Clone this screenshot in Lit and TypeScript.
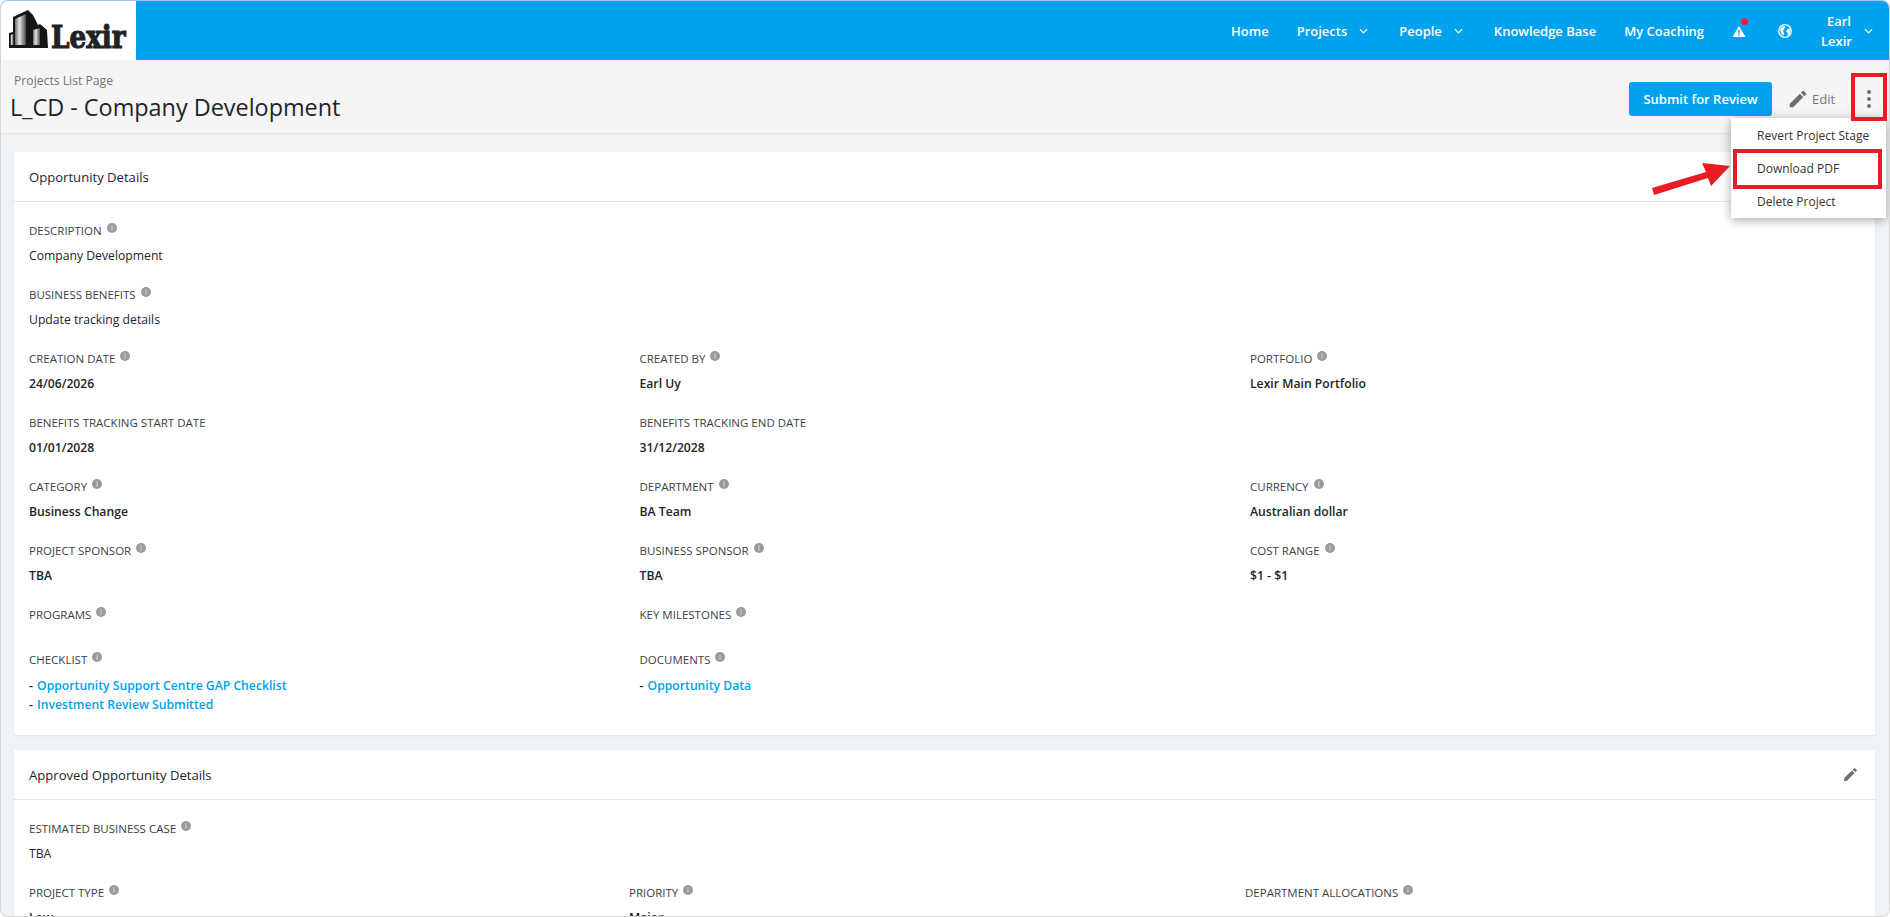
import { LitElement, html, css, svg } from 'lit';
import { customElement } from 'lit/decorators.js';

const PENCIL = svg`<path d="M3 17.25V21h3.75L17.81 9.94l-3.75-3.75L3 17.25zM20.71 7.04a1 1 0 0 0 0-1.41l-2.34-2.34a1 1 0 0 0-1.41 0l-1.83 1.83 3.75 3.75 1.83-1.83z"/>`;

const chevron = () => html`<svg class="chev" viewBox="0 0 10 6"><path d="M1 1l4 4 4-4" fill="none" stroke="currentColor" stroke-width="1.3"/></svg>`;

const info = () => html`<svg class="info" viewBox="0 0 10 10"><circle cx="5" cy="5" r="5" fill="#9b9b9b"/><rect x="4.4" y="4.3" width="1.2" height="3.2" fill="#d8d8d8"/><rect x="4.4" y="2.5" width="1.2" height="1.1" fill="#d8d8d8"/></svg>`;

interface Field {
  label: string;
  value?: string;
  strong?: boolean;
  noInfo?: boolean;
}

const fieldsA: Field[] = [
  { label: 'CREATION DATE', value: '24/06/2026', strong: true },
  { label: 'CREATED BY', value: 'Earl Uy', strong: true },
  { label: 'PORTFOLIO', value: 'Lexir Main Portfolio', strong: true },
  { label: 'BENEFITS TRACKING START DATE', value: '01/01/2028', strong: true, noInfo: true },
  { label: 'BENEFITS TRACKING END DATE', value: '31/12/2028', strong: true, noInfo: true },
  { label: '' },
  { label: 'CATEGORY', value: 'Business Change', strong: true },
  { label: 'DEPARTMENT', value: 'BA Team', strong: true },
  { label: 'CURRENCY', value: 'Australian dollar', strong: true },
  { label: 'PROJECT SPONSOR', value: 'TBA', strong: true },
  { label: 'BUSINESS SPONSOR', value: 'TBA', strong: true },
  { label: 'COST RANGE', value: '$1 - $1', strong: true },
];

@customElement('app-root')
export class AppRoot extends LitElement {
  static styles = css`
    :host {
      display: block;
      height: 917px;
      overflow: hidden;
      font-family: 'Open Sans', sans-serif;
      color: #212529;
    }
    .frame {
      position: relative;
      height: 917px;
      box-sizing: border-box;
      overflow: hidden;
      background: #f0f3f6;
      border: 1px solid #d4d4d4;
      border-top-color: #9fc9e6;
      border-radius: 8px;
    }
    nav {
      height: 59px;
      display: flex;
      align-items: center;
      background: #00a2ee;
      color: #fff;
      font-size: 13px;
      font-weight: 600;
    }
    .logo {
      width: 135px;
      height: 59px;
      background: #fff;
      display: flex;
      align-items: flex-start;
      padding: 7px 0 0 7px;
      box-sizing: border-box;
      flex: none;
    }
    .logo svg { width: 41px; height: 42px; flex: none; }
    .logo span {
      display: inline-block;
      font-family: 'DejaVu Serif', 'Liberation Serif', serif;
      font-weight: 700;
      font-size: 32px;
      line-height: 32px;
      color: #222;
      -webkit-text-stroke: 1.2px #222;
      margin: 13px 0 0 2px;
      transform: scaleX(0.82);
      transform-origin: left center;
    }
    .menu {
      margin-left: auto;
      display: flex;
      align-items: center;
      height: 100%;
    }
    .menu a { display: flex; align-items: center; white-space: nowrap; }
    .chev { width: 9px; height: 6px; margin-left: 12px; }
    .user {
      width: 30px;
      text-align: right;
      line-height: 20px;
      margin-left: 29px;
    }
    .alert { position: relative; width: 16px; height: 16px; margin-left: 27px; }
    .alert svg { width: 16px; height: 16px; display: block; }
    .alert i {
      position: absolute;
      left: 10px;
      top: -5px;
      width: 7px;
      height: 7px;
      border-radius: 50%;
      background: #ef1c4b;
    }
    .globe { width: 14px; height: 14px; margin-left: 31px; }
    .user-chev { margin: 0 16px 0 1px; display: flex; }
    header {
      height: 74px;
      box-sizing: border-box;
      background: #f5f5f5;
      border-bottom: 1px solid #dfe3e6;
      display: flex;
      align-items: flex-start;
      justify-content: space-between;
      position: relative;
    }
    .crumb {
      font-size: 12.2px;
      color: #6c757d;
      margin: 13px 0 0 13px;
      line-height: 16px;
    }
    h1 {
      font-size: 23.4px;
      font-weight: 400;
      line-height: 32px;
      margin: 2px 0 0 9px;
      color: #212529;
    }
    .actions {
      display: flex;
      align-items: center;
      margin: 22px 18px 0 0;
    }
    .submit {
      width: 143px;
      height: 34px;
      box-sizing: border-box;
      background: #00a2ee;
      color: #fff;
      border: 0;
      border-radius: 3px;
      font: 600 13px 'Open Sans', sans-serif;
      padding: 0;
    }
    .edit {
      display: flex;
      align-items: center;
      color: #777;
      font-size: 13px;
      margin-left: 15px;
      width: 58px;
    }
    .edit svg { width: 22px; height: 22px; fill: #6f6f6f; margin-right: 3px; }
    .dots {
      display: flex;
      flex-direction: column;
      gap: 3px;
      margin-left: 22px;
      width: 4px;
    }
    .dots i { width: 4px; height: 4px; border-radius: 50%; background: #707070; }
    .dropdown {
      position: absolute;
      left: 1730px;
      top: 117px;
      width: 155px;
      height: 100px;
      box-sizing: border-box;
      padding-top: 1px;
      background: #fff;
      box-shadow: 0 2px 10px rgba(0, 0, 0, 0.35);
      font-size: 12px;
      color: #333;
      z-index: 2;
    }
    .dropdown div {
      height: 33px;
      line-height: 33px;
      padding-left: 26px;
      white-space: nowrap;
    }
    .box {
      position: absolute;
      border: 4px solid #e91c24;
      box-sizing: border-box;
      z-index: 3;
    }
    .box.dots-box { left: 1850px; top: 72px; width: 36px; height: 48px; }
    .box.pdf-box { left: 1732px; top: 148px; width: 149px; height: 40px; }
    .arrow { position: absolute; left: 1649px; top: 159px; width: 84px; height: 36px; z-index: 3; }
    main { padding: 18px 14px 0 13px; }
    .card {
      background: #fff;
      box-shadow: 0 1px 2px rgba(0, 0, 0, 0.07);
      margin-bottom: 15px;
    }
    .card-head {
      height: 50px;
      box-sizing: border-box;
      display: flex;
      align-items: center;
      justify-content: space-between;
      padding: 0 16px 0 15px;
      border-bottom: 1px solid #e2e4e6;
      font-size: 13.1px;
    }
    .card-head svg { width: 17px; height: 17px; fill: #6f6f6f; }
    .card-body { padding: 18px 15px 0; }
    .card-a .card-body { height: 533px; box-sizing: border-box; }
    .f { height: 64px; }
    .f .l {
      font-size: 11.5px;
      line-height: 16px;
      height: 16px;
      color: #3a3f44;
      display: flex;
      align-items: flex-start;
      padding-top: 3px;
      margin-bottom: 8px;
    }
    .info { width: 10px; height: 10px; margin: 0 0 0 5px; flex: none; }
    .f .v { font-size: 12.2px; line-height: 18px; color: #212529; }
    .f .v.strong { font-weight: 600; }
    .grid3 { display: grid; grid-template-columns: 610.5px 610.5px 1fr; }
    .grid3b { display: grid; grid-template-columns: 600px 616px 1fr; }
    .short { height: 45px; }
    .link-line { font-size: 12.2px; line-height: 19px; color: #212529; font-weight: 600; }
    .link-line a { color: #00a2ee; margin-left: 1px; }
  `;

  private field(f: Field) {
    if (!f.label) return html`<div class="f"></div>`;
    return html`<div class="f">
      <div class="l">${f.label}${f.noInfo ? '' : info()}</div>
      ${f.value ? html`<div class="v ${f.strong ? 'strong' : ''}">${f.value}</div>` : ''}
    </div>`;
  }

  private links(label: string, items: string[]) {
    return html`<div class="f">
      <div class="l">${label}${info()}</div>
      ${items.map((t) => html`<div class="link-line">- <a>${t}</a></div>`)}
    </div>`;
  }

  private fieldLabel(label: string) {
    return html`<div class="l">${label}${info()}</div>`;
  }

  render() {
    return html`
      <div class="frame">
        <nav>
          <div class="logo">
            <svg viewBox="0 0 41 42">
              <defs>
                <linearGradient id="g" x1="0" x2="1"><stop offset="0" stop-color="#6a6a6a"/><stop offset=".4" stop-color="#e4e4e4"/><stop offset="1" stop-color="#4a4a4a"/></linearGradient>
              </defs>
              <path d="M1 25l4-1V9l15-7 5 5 5 10 2-1 7 6 1 18H1z" fill="#161616"/>
              <path d="M7 11l11-5v31H7z" fill="url(#g)"/>
              <path d="M25 22l7-2v17h-7z" fill="url(#g)"/>
              <path d="M2.500 27l3-1v11h-3z" fill="url(#g)"/>
            </svg>
            <span>Lexir</span>
          </div>
          <div class="menu">
            <a>Home</a>
            <a style="margin-left:28px">Projects${chevron()}</a>
            <a style="margin-left:31px">People${chevron()}</a>
            <a style="margin-left:31px">Knowledge Base</a>
            <a style="margin-left:28px">My Coaching</a>
            <div class="alert">
              <svg viewBox="0 0 16 16"><path d="M8 3l6.500 11h-13z" fill="#fff"/><rect x="7.300" y="6.500" width="1.400" height="4" fill="#00a2ee"/><rect x="7.300" y="11.300" width="1.400" height="1.500" fill="#00a2ee"/></svg>
              <i></i>
            </div>
            <svg class="globe" viewBox="0 0 14 14"><circle cx="7" cy="7" r="6.300" fill="#00a2ee" stroke="#fff" stroke-width="1.300"/><path d="M2 5.500l2-2.500 2.500-1 .8 1.200L6 5l-1 2 1.200 2-.5 2.500L3.500 10zM9 5.500l2.500-1.200L12.500 7l-1 3-2 1.700.3-2.700-1.600-1.500z" fill="#fff"/></svg>
            <div class="user">Earl<br />Lexir</div>
            <span class="user-chev">${chevron()}</span>
          </div>
        </nav>
        <header>
          <div>
            <div class="crumb">Projects List Page</div>
            <h1>L_CD - Company Development</h1>
          </div>
          <div class="actions">
            <button class="submit">Submit for Review</button>
            <div class="edit"><svg viewBox="0 0 24 24">${PENCIL}</svg>Edit</div>
            <div class="dots"><i></i><i></i><i></i></div>
          </div>
        </header>
        <main>
          <section class="card card-a">
            <div class="card-head">Opportunity Details</div>
            <div class="card-body">
              ${this.field({ label: 'DESCRIPTION', value: 'Company Development' })}
              ${this.field({ label: 'BUSINESS BENEFITS', value: 'Update tracking details' })}
              <div class="grid3">
                ${fieldsA.map((f) => this.field(f))}
                <div class="f short">${this.fieldLabel('PROGRAMS')}</div>
                <div class="f short">${this.fieldLabel('KEY MILESTONES')}</div>
                <div class="f short"></div>
                ${this.links('CHECKLIST', ['Opportunity Support Centre GAP Checklist', 'Investment Review Submitted'])}
                ${this.links('DOCUMENTS', ['Opportunity Data'])}
              </div>
            </div>
          </section>
          <section class="card">
            <div class="card-head">Approved Opportunity Details<svg viewBox="0 0 24 24">${PENCIL}</svg></div>
            <div class="card-body">
              ${this.field({ label: 'ESTIMATED BUSINESS CASE', value: 'TBA' })}
              <div class="grid3b">
                ${this.field({ label: 'PROJECT TYPE', value: 'Low', strong: true })}
                ${this.field({ label: 'PRIORITY', value: 'Major', strong: true })}
                ${this.field({ label: 'DEPARTMENT ALLOCATIONS' })}
              </div>
            </div>
          </section>
        </main>
        <div class="dropdown">
          <div>Revert Project Stage</div>
          <div>Download PDF</div>
          <div>Delete Project</div>
        </div>
        <div class="box dots-box"></div>
        <div class="box pdf-box"></div>
        <svg class="arrow" viewBox="0 0 84 36">
          <path d="M80 6L52 3l4 9L2 28l2 7 54-17 3 8z" fill="#e91c24"/>
        </svg>
      </div>
    `;
  }
}
